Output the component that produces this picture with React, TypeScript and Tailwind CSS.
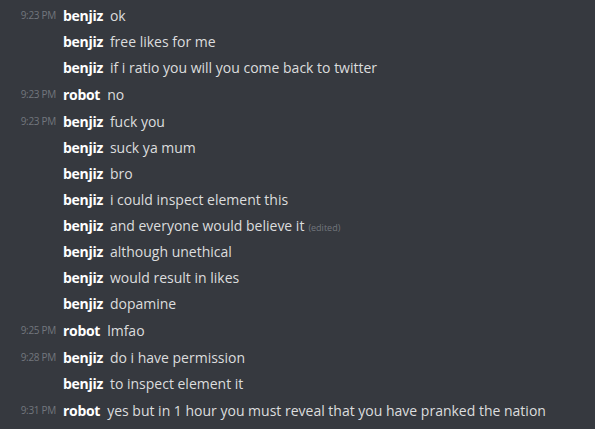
const messages = [
  { time: "9:23 PM", user: "benjiz", text: "ok" },
  { user: "benjiz", text: "free likes for me" },
  { user: "benjiz", text: "if i ratio you will you come back to twitter" },
  { time: "9:23 PM", user: "robot", text: "no" },
  { time: "9:23 PM", user: "benjiz", text: "fuck you" },
  { user: "benjiz", text: "suck ya mum" },
  { user: "benjiz", text: "bro" },
  { user: "benjiz", text: "i could inspect element this" },
  { user: "benjiz", text: "and everyone would believe it", edited: true },
  { user: "benjiz", text: "although unethical" },
  { user: "benjiz", text: "would result in likes" },
  { user: "benjiz", text: "dopamine" },
  { time: "9:25 PM", user: "robot", text: "lmfao" },
  { time: "9:28 PM", user: "benjiz", text: "do i have permission" },
  { user: "benjiz", text: "to inspect element it" },
  { time: "9:31 PM", user: "robot", text: "yes but in 1 hour you must reveal that you have pranked the nation" },
];

export default function App() {
  return (
    <div className="w-[595px] h-[429px] overflow-hidden bg-[#36393f] pt-[2px] font-['Open_Sans',sans-serif]">
      {messages.map((m, i) => (
        <div key={i} className={`flex items-center h-[26px] ${m.time && i > 0 ? "mt-px" : ""}`}>
          <div className="w-[56px] shrink-0 text-right text-[10px] text-[#72767d] tracking-[-0.3px]">
            {m.time ?? ""}
          </div>
          <div className="ml-[7px] flex items-baseline whitespace-nowrap">
            <span className="text-[14px] font-bold text-white tracking-[-0.3px]">{m.user}</span>
            <span className="ml-[7px] text-[14px] text-[#dcddde]">{m.text}</span>
            {m.edited && (
              <span className="ml-[4px] text-[9px] text-[#72767d]">(edited)</span>
            )}
          </div>
        </div>
      ))}
    </div>
  );
}
